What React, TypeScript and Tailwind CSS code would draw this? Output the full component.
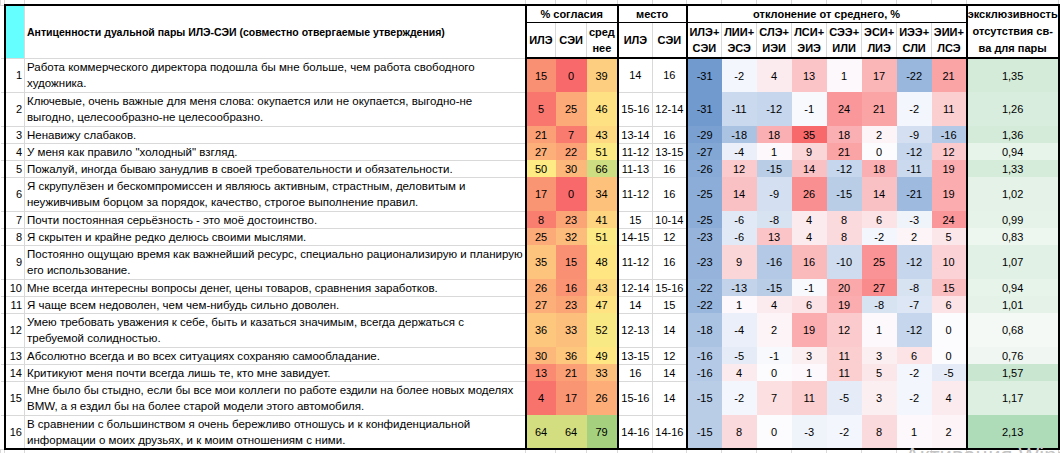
import React from "react";

type Row = {
  text: string[];
  ile: number;
  sei: number;
  avg: number;
  placeIle: string;
  placeSei: string;
  dev: number[];
  excl: string;
};

const rows: Row[] = [
  {
    text: [
      "Работа коммерческого директора подошла бы мне больше, чем работа свободного",
      "художника.",
    ],
    ile: 15, sei: 0, avg: 39, placeIle: "14", placeSei: "16",
    dev: [-31, -2, 4, 13, 1, 17, -22, 21], excl: "1,35",
  },
  {
    text: [
      "Ключевые, очень важные для меня слова: окупается или не окупается, выгодно-не",
      "выгодно, целесообразно-не целесообразно.",
    ],
    ile: 5, sei: 25, avg: 46, placeIle: "15-16", placeSei: "12-14",
    dev: [-31, -11, -12, -1, 24, 21, -2, 11], excl: "1,26",
  },
  {
    text: ["Ненавижу слабаков."],
    ile: 21, sei: 7, avg: 43, placeIle: "13-14", placeSei: "16",
    dev: [-29, -18, 18, 35, 18, 2, -9, -16], excl: "1,36",
  },
  {
    text: ['У меня как правило "холодный" взгляд.'],
    ile: 27, sei: 22, avg: 51, placeIle: "11-12", placeSei: "13-15",
    dev: [-27, -4, 1, 9, 21, 0, -12, 12], excl: "0,94",
  },
  {
    text: ["Пожалуй, иногда бываю занудлив в своей требовательности и обязательности."],
    ile: 50, sei: 30, avg: 66, placeIle: "11-13", placeSei: "16",
    dev: [-26, 12, -15, 14, -12, 18, -11, 19], excl: "1,33",
  },
  {
    text: [
      "Я скрупулёзен и бескомпромиссен и являюсь активным, страстным, деловитым и",
      "неуживчивым борцом за порядок, качество, строгое выполнение правил.",
    ],
    ile: 17, sei: 0, avg: 34, placeIle: "11-12", placeSei: "16",
    dev: [-25, 14, -9, 26, -15, 14, -21, 19], excl: "1,02",
  },
  {
    text: ["Почти постоянная серьёзность - это моё достоинство."],
    ile: 8, sei: 23, avg: 41, placeIle: "15", placeSei: "10-14",
    dev: [-25, -6, -8, 4, 8, 6, -3, 24], excl: "0,99",
  },
  {
    text: ["Я скрытен и крайне редко делюсь своими мыслями."],
    ile: 25, sei: 32, avg: 51, placeIle: "14-15", placeSei: "12",
    dev: [-23, -6, 13, 4, 8, -2, 2, 5], excl: "0,83",
  },
  {
    text: [
      "Постоянно ощущаю время как важнейший ресурс, специально рационализирую и планирую",
      "его использование.",
    ],
    ile: 35, sei: 15, avg: 48, placeIle: "11-12", placeSei: "16",
    dev: [-23, 9, -16, 16, -10, 25, -12, 10], excl: "1,07",
  },
  {
    text: ["Мне всегда интересны вопросы денег, цены товаров, сравнения заработков."],
    ile: 26, sei: 16, avg: 43, placeIle: "12-14", placeSei: "15-16",
    dev: [-22, -13, -15, -1, 20, 27, -8, 15], excl: "0,94",
  },
  {
    text: ["Я чаще всем недоволен, чем чем-нибудь сильно доволен."],
    ile: 27, sei: 23, avg: 47, placeIle: "14", placeSei: "15",
    dev: [-22, 1, 4, 6, 19, -8, -7, 6], excl: "1,01",
  },
  {
    text: [
      "Умею требовать уважения к себе, быть и казаться значимым, всегда держаться с",
      "требуемой солидностью.",
    ],
    ile: 36, sei: 33, avg: 52, placeIle: "12-13", placeSei: "14",
    dev: [-18, -4, 2, 19, 12, 1, -12, 0], excl: "0,68",
  },
  {
    text: ["Абсолютно всегда и во всех ситуациях сохраняю самообладание."],
    ile: 30, sei: 36, avg: 49, placeIle: "13-15", placeSei: "12",
    dev: [-16, -5, -1, 3, 11, 3, 6, 0], excl: "0,76",
  },
  {
    text: ["Критикуют меня почти всегда лишь те, кто мне завидует."],
    ile: 13, sei: 21, avg: 33, placeIle: "16", placeSei: "14",
    dev: [-16, 4, 0, 1, 11, 5, -2, -5], excl: "1,57",
  },
  {
    text: [
      "Мне было бы стыдно, если бы все мои коллеги по работе ездили на более новых моделях",
      "BMW, а я ездил бы на более старой модели этого автомобиля.",
    ],
    ile: 4, sei: 17, avg: 26, placeIle: "15-16", placeSei: "14",
    dev: [-15, -2, 7, 11, -5, 3, -2, 4], excl: "1,17",
  },
  {
    text: [
      "В сравнении с большинством я очень бережливо отношусь и к конфиденциальной",
      "информации о моих друзьях, и к моим отношениям с ними.",
    ],
    ile: 64, sei: 64, avg: 79, placeIle: "14-16", placeSei: "14-16",
    dev: [-15, 8, 0, -3, -2, 8, 1, 2], excl: "2,13",
  },
];

const devHead = [
  ["ИЛЭ+", "СЭИ"],
  ["ЛИИ+", "ЭСЭ"],
  ["СЛЭ+", "ИЭИ"],
  ["ЛСИ+", "ЭИЭ"],
  ["СЭЭ+", "ИЛИ"],
  ["ЭСИ+", "ЛИЭ"],
  ["ИЭЭ+", "СЛИ"],
  ["ЭИИ+", "ЛСЭ"],
];

type RGB = [number, number, number];

function mix(a: RGB, b: RGB, t: number) {
  const k = Math.max(0, Math.min(1, t));
  const c = a.map((v, i) => Math.round(v + (b[i] - v) * k));
  return `rgb(${c[0]}, ${c[1]}, ${c[2]})`;
}

const RED: RGB = [248, 105, 107];
const YELLOW: RGB = [255, 235, 132];
const GREEN: RGB = [99, 190, 123];
const WHITE: RGB = [252, 252, 255];
const BLUE: RGB = [90, 138, 198];

// red -> yellow -> green, yellow sits at 50%
function agreeColor(v: number) {
  return v <= 50 ? mix(RED, YELLOW, v / 50) : mix(YELLOW, GREEN, (v - 50) / 50);
}

function devColor(v: number) {
  return v >= 0 ? mix(WHITE, RED, v / 35) : mix(WHITE, BLUE, -v / 36);
}

function exclColor(s: string) {
  const v = parseFloat(s.replace(",", "."));
  return mix([244, 249, 245], [174, 219, 184], (v - 0.68) / (2.13 - 0.68));
}

const grid = "border border-[#d9d9d9]";
const fill = "border-0";

export default function App() {
  return (
    <div
      className="relative h-[453px] w-[1060px] overflow-hidden bg-white text-[11px] leading-[14px] text-black"
      style={{ fontFamily: '"Liberation Sans", Arial, sans-serif' }}
    >
      <table className="table-fixed border-collapse">
        <colgroup>
          <col className="w-[4px]" />
          <col className="w-[20px]" />
          <col className="w-[498px]" />
          <col className="w-[30px]" />
          <col className="w-[31px]" />
          <col className="w-[31px]" />
          <col className="w-[35px]" />
          <col className="w-[34px]" />
          {devHead.map((_, i) => (
            <col key={i} className="w-[35px]" />
          ))}
          <col className="w-[91px]" />
        </colgroup>
        <tbody>
          {/* strip of sheet above the table */}
          <tr className="h-[5px]">
            {Array.from({ length: 17 }).map((_, i) => (
              <td key={i} className="border-x border-[#d9d9d9] p-0" />
            ))}
          </tr>

          {/* header */}
          <tr className="h-[17px] font-bold">
            <td rowSpan={2} className={`${grid} border-l-0`} />
            <td
              rowSpan={2}
              className={`${grid} border-t-2 border-l-2 border-t-black border-l-black bg-[#66ffff] p-0`}
            />
            <td
              rowSpan={2}
              className={`${grid} border-t-2 border-r-2 border-t-black border-r-black px-[2px] text-left text-[10.5px] whitespace-nowrap`}
            >
              Антиценности дуальной пары ИЛЭ-СЭИ (совместно отвергаемые утверждения)
            </td>
            <td
              colSpan={3}
              className="border-t-2 border-r-2 border-b border-t-black border-r-black border-b-black p-0 text-center"
            >
              % согласия
            </td>
            <td
              colSpan={2}
              className="border-t-2 border-r-2 border-b border-t-black border-r-black border-b-black p-0 text-center"
            >
              место
            </td>
            <td
              colSpan={8}
              className="border-t-2 border-r-2 border-b border-t-black border-r-black border-b-black p-0 text-center"
            >
              отклонение от среднего, %
            </td>
            <td
              rowSpan={2}
              className="border-2 border-black p-0 text-center leading-[17px]"
            >
              эксклюзивность
              <br />
              отсутствия св-
              <br />
              ва для пары
            </td>
          </tr>
          <tr className="h-[34px] font-bold">
            <td className={`${grid} border-b-2 border-b-black p-0 text-center`}>ИЛЭ</td>
            <td className={`${grid} border-b-2 border-b-black p-0 text-center`}>СЭИ</td>
            <td className={`${grid} border-r-2 border-b-2 border-r-black border-b-black p-0 text-center leading-[16px]`}>
              сред
              <br />
              нее
            </td>
            <td className={`${grid} border-b-2 border-b-black p-0 text-center`}>ИЛЭ</td>
            <td className={`${grid} border-r-2 border-b-2 border-r-black border-b-black p-0 text-center`}>СЭИ</td>
            {devHead.map(([a, b], i) => (
              <td
                key={i}
                className={`${grid} border-b-2 border-b-black p-0 text-center leading-[16px] ${
                  i === 7 ? "border-r-2 border-r-black" : ""
                }`}
              >
                {a}
                <br />
                {b}
              </td>
            ))}
          </tr>

          {/* data */}
          {rows.map((r, idx) => {
            const last = idx === rows.length - 1;
            const bottom = last ? "border-b-2 border-b-black" : "";
            return (
              <tr key={idx} className={r.text.length > 1 ? "h-[34px]" : "h-[17px]"}>
                <td className={`${grid} border-l-0 p-0`} />
                <td className={`${grid} border-l-2 border-l-black p-0 pr-[2px] text-right ${bottom}`}>
                  {idx + 1}
                </td>
                <td
                  className={`${grid} border-r-2 border-r-black p-0 px-[2px] text-left text-[11.5px] leading-[16px] whitespace-nowrap overflow-hidden ${bottom}`}
                >
                  {r.text.map((t, i) => (
                    <div key={i}>{t}</div>
                  ))}
                </td>
                <td className={`${fill} p-0 text-center ${bottom}`} style={{ backgroundColor: agreeColor(r.ile) }}>
                  {r.ile}
                </td>
                <td className={`${fill} p-0 text-center ${bottom}`} style={{ backgroundColor: agreeColor(r.sei) }}>
                  {r.sei}
                </td>
                <td
                  className={`${fill} border-r-2 border-r-black p-0 text-center ${bottom}`}
                  style={{ backgroundColor: agreeColor(r.avg) }}
                >
                  {r.avg}
                </td>
                <td className={`${grid} p-0 text-center ${bottom}`}>{r.placeIle}</td>
                <td className={`${grid} border-r-2 border-r-black p-0 text-center ${bottom}`}>{r.placeSei}</td>
                {r.dev.map((v, i) => (
                  <td
                    key={i}
                    className={`${fill} p-0 text-center ${i === 7 ? "border-r-2 border-r-black" : ""} ${bottom}`}
                    style={{ backgroundColor: devColor(v) }}
                  >
                    {v}
                  </td>
                ))}
                <td
                  className={`${fill} border-r-2 border-r-black p-0 text-center ${bottom}`}
                  style={{ backgroundColor: exclColor(r.excl) }}
                >
                  {r.excl}
                </td>
              </tr>
            );
          })}

          {/* strip of sheet below the table */}
          <tr className="h-[8px]">
            {Array.from({ length: 17 }).map((_, i) => (
              <td key={i} className="border-x border-[#d9d9d9] p-0" />
            ))}
          </tr>
        </tbody>
      </table>

      {/* OS watermark over the sheet */}
      <div
        className="pointer-events-none absolute top-[445px] left-[905px] text-[22px] leading-none whitespace-nowrap text-[#c4c4c4]"
        style={{ fontFamily: '"Liberation Sans", Arial, sans-serif' }}
      >
        Активация Windows
      </div>
    </div>
  );
}
